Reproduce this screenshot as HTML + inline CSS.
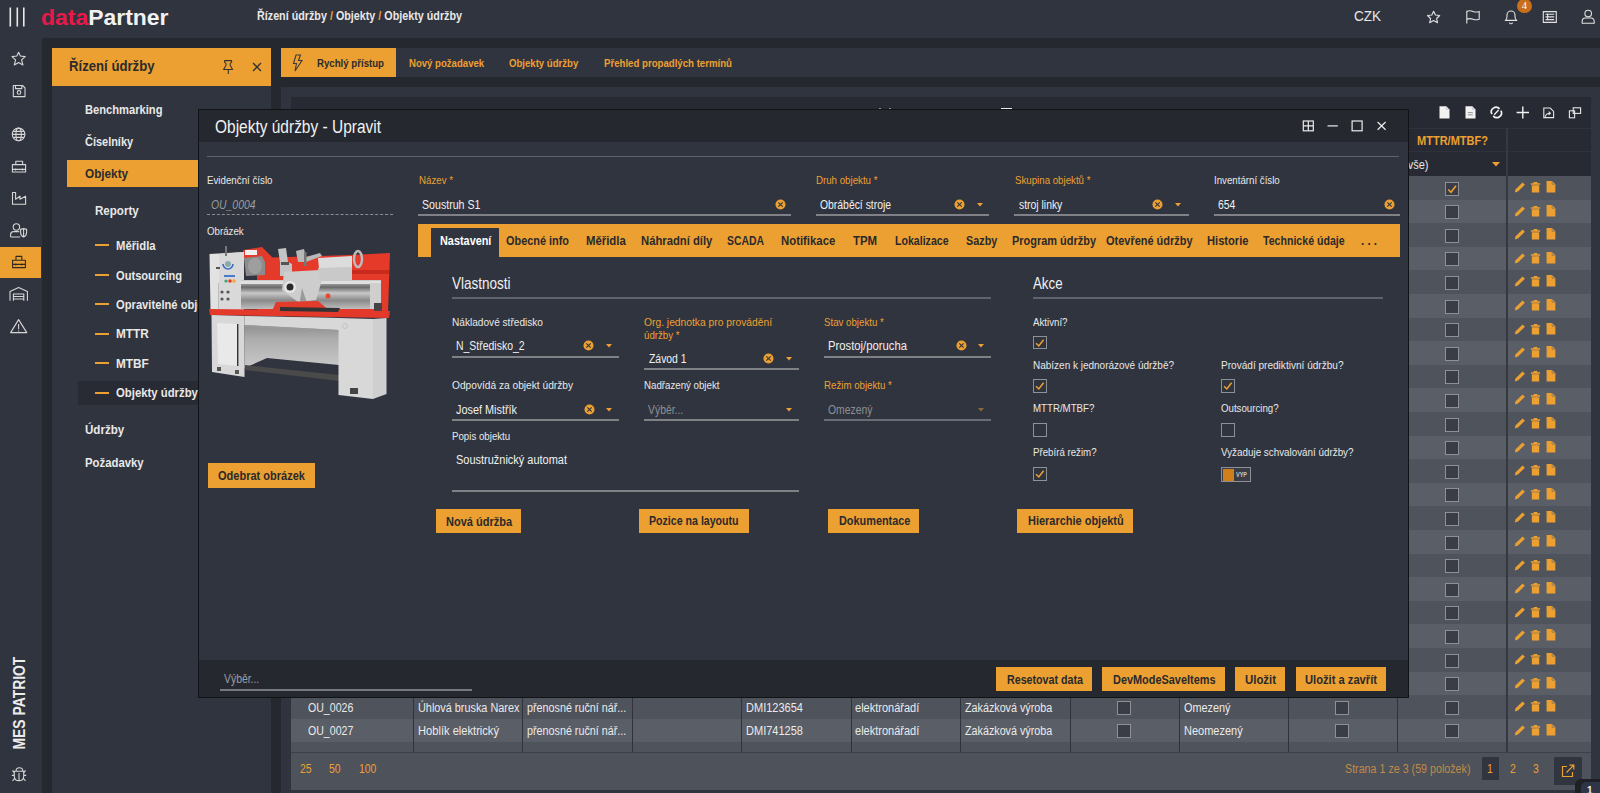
<!DOCTYPE html><html><head><meta charset="utf-8"><style>
*{box-sizing:border-box;margin:0;padding:0}
html,body{width:1600px;height:793px;overflow:hidden;background:#262830;font-family:"Liberation Sans",sans-serif;color:#e8e8e8}
.a{position:absolute}
.t{position:absolute;white-space:nowrap;line-height:1.2}
svg{position:absolute;overflow:visible}
</style></head><body><div class="a" style="left:0px;top:0px;width:1600px;height:38px;background:#30343e;"></div>
<div class="a" style="left:0px;top:38px;width:42px;height:755px;background:#30343e;"></div>
<div class="a" style="left:52px;top:48px;width:219px;height:745px;background:#30343e;"></div>
<div class="a" style="left:52px;top:48px;width:219px;height:38px;background:#eda032;"></div>
<div class="a" style="left:281px;top:48px;width:1319px;height:29px;background:#30343e;"></div>
<div class="a" style="left:281px;top:87px;width:1319px;height:706px;background:#30343e;"></div>
<svg style="left:0;top:0" width="40" height="38"><g stroke="#e8e8e8" stroke-width="1.6"><line x1="10.3" y1="7.5" x2="10.3" y2="26.5"/><line x1="17.3" y1="7.5" x2="17.3" y2="26.5"/><line x1="23.8" y1="7.5" x2="23.8" y2="26.5"/></g></svg>
<div class="t" style="left:41px;top:4.3px;font-size:22.5px;line-height:1.2;font-weight:700;transform-origin:0 0;transform:scaleX(1.02)"><span style="color:#e8194a">data</span><span style="color:#f2f2f2">Partner</span></div>
<div class="t" style="left:257px;top:8.57px;font-size:12.626px;line-height:1.2;color:#e8e8e8;font-weight:700;transform:scaleX(0.8528);transform-origin:0 0;">Řízení údržby <span style="color:#eda032">/</span> Objekty <span style="color:#eda032">/</span> Objekty údržby</div>
<div class="t" style="left:1354px;top:8.23px;font-size:14.868px;line-height:1.2;color:#e8e8e8;font-weight:400;transform:scaleX(0.9080);transform-origin:0 0;">CZK</div>
<svg style="left:1420px;top:0" width="180" height="38" viewBox="1420 0 180 38"><g fill="none" stroke="#e2e2e2" stroke-width="1.1" stroke-linejoin="round">
<path d="M1433.6 11.2 L1435.4 15 L1439.7 15.5 L1436.6 18.5 L1437.5 22.7 L1433.6 20.6 L1429.7 22.7 L1430.6 18.5 L1427.5 15.5 L1431.8 15 Z"/>
<path d="M1466.8 23.5 V10.8 M1466.8 11.4 Q1469.8 10.2 1473 11.4 T1479.2 11.4 V19.2 Q1476.2 20.4 1473 19.2 T1466.8 19.2"/>
<path d="M1505.3 20.4 Q1507 19.2 1507 16.5 V15 A4 4 0 0 1 1515 15 V16.5 Q1515 19.2 1516.8 20.4 Z M1509.6 22.4 A1.4 1.4 0 0 0 1512.4 22.4"/>
<rect x="1543.3" y="11.6" width="13" height="10.8"/><path d="M1545.5 14.2 H1554.2 M1545.5 16.9 H1554.2 M1545.5 19.6 H1554.2 M1547.6 13.6 V20.2"/>
<circle cx="1588.2" cy="13.6" r="3.3"/><path d="M1582.2 23.2 V21.2 A3.2 3.2 0 0 1 1585.4 18 H1591 A3.2 3.2 0 0 1 1594.2 21.2 V23.2 Z"/>
</g></svg>
<div class="a" style="left:1517.3px;top:-1px;width:14.4px;height:14.4px;border-radius:50%;background:#c96f1c"></div>
<div class="t" style="left:1517.3px;top:-0.5px;width:14.4px;text-align:center;font-size:10.5px;line-height:12px;color:#fff;font-family:'Liberation Serif',serif">4</div>
<div class="a" style="left:0px;top:247px;width:41px;height:31px;background:#eda032;"></div>
<svg style="left:0;top:40px" width="42" height="300" viewBox="0 40 42 300"><g fill="none" stroke="#d6d6d6" stroke-width="1.1" stroke-linejoin="round">
<path d="M18.6 52.2 L20.4 56 L25.2 56.6 L21.6 59.9 L22.9 65 L18.6 62.5 L14.3 65 L15.6 59.9 L12 56.6 L16.8 56 Z"/>
<path d="M13.3 85.5 H22.6 L25 87.9 V96.6 H13.3 Z M15.5 85.5 V88.6 H21.8 V85.5"/><circle cx="19" cy="92.4" r="1.8"/>
<circle cx="18.6" cy="134.4" r="6.3"/><ellipse cx="18.6" cy="134.4" rx="2.7" ry="6.3"/><path d="M12.3 134.4 H24.9 M13.2 131.4 H24 M13.2 137.4 H24"/>
<path d="M12.4 164.6 H25.6 V172 H12.4 Z M15.8 164.6 V161.2 H22.6 V164.6 M12.4 169.4 H25.6 M15.6 168.4 V170.4 M22.4 168.4 V170.4"/>
<path d="M12.5 204.3 V192.5 H15.6 V199.2 L20 196.2 V199.2 L25.6 196.2 V204.3 Z"/>
<circle cx="16.4" cy="227" r="3.2"/><path d="M10.6 237 V234.6 A3 3 0 0 1 13.6 231.6 H19.2 M10.6 237 H20.2"/>
<path d="M20.6 229.4 L23.6 228.6 L26.6 229.4 V232.6 Q26.6 235.9 23.6 237 Q20.6 235.9 20.6 232.6 Z M23.6 228.8 V236.8"/>
<path d="M10 300.8 V291.4 L18.6 287.4 L27.4 291.4 V300.8 M13.4 300.8 V294 H23.8 V300.8 M13.4 296.5 H23.8 M13.4 299 H23.8"/>
<path d="M18.6 319.6 L26.8 332.6 H10.6 Z M18.6 324 V329.2 M18.6 330.6 V331.6"/>
</g>
<g fill="none" stroke="#2e2a22" stroke-width="1.1" stroke-linejoin="round"><path d="M12.6 260.3 H25.4 V267.6 H12.6 Z M16 260.3 V256.4 H21.8 V260.3 M12.6 264.4 H25.4 M15.8 263.4 V265.4 M21.8 263.4 V265.4"/></g>
</svg>
<div class="t" style="left:0;top:0;font-size:17px;line-height:1.2;font-weight:700;color:#ececec;transform-origin:0 0;transform:translate(9.7px,749.5px) rotate(-90deg) scaleX(0.817)">MES PATRIOT</div>
<svg style="left:0;top:760px" width="42" height="30" viewBox="0 760 42 30"><path fill="none" stroke="#d6d6d6" stroke-width="1.1" d="M16 771.2 A3.4 3.4 0 0 1 22.8 771.2 M14.3 771.2 H23.7 V776 Q23.7 780.8 19 780.8 Q14.3 780.8 14.3 776 Z M19 773 V780.5 M14.3 772.8 L12.5 770.4 M23.7 772.8 L25.5 770.4 M14.3 775.4 H11.8 M23.7 775.4 H26.2 M14.5 778.6 L12.5 780.8 M23.5 778.6 L25.5 780.8"/></svg>
<div class="t" style="left:69px;top:57.80px;font-size:14.750px;line-height:1.2;color:#2b2b2b;font-weight:700;transform:scaleX(0.8916);transform-origin:0 0;">Řízení údržby</div>
<svg style="left:220px;top:57px" width="16" height="20" viewBox="220 57 16 20"><g fill="none" stroke="#33302a" stroke-width="1.05" stroke-linejoin="round"><path d="M224.6 60.6 H231.6 V62.4 L230.2 63.4 V65.2 L232.6 69.4 H223.6 L226 65.2 V63.4 L224.6 62.4 Z M228.3 69.6 V74"/></g></svg>
<svg style="left:252px;top:62px" width="10" height="10" viewBox="0 0 10 10"><g stroke="#333" stroke-width="1.3"><line x1="1" y1="1" x2="9" y2="9"/><line x1="9" y1="1" x2="1" y2="9"/></g></svg>
<div class="a" style="left:67px;top:160px;width:131px;height:27px;background:#eda032;"></div>
<div class="a" style="left:78px;top:381px;width:120px;height:24px;background:#282b33;"></div>
<div class="t" style="left:84.5px;top:102.22px;font-size:13.216px;line-height:1.2;color:#e8e8e8;font-weight:700;transform:scaleX(0.8450);transform-origin:0 0;">Benchmarking</div>
<div class="t" style="left:84.5px;top:133.72px;font-size:13.216px;line-height:1.2;color:#e8e8e8;font-weight:700;transform:scaleX(0.8295);transform-origin:0 0;">Číselníky</div>
<div class="t" style="left:84.5px;top:166.22px;font-size:13.216px;line-height:1.2;color:#2b2b2b;font-weight:700;transform:scaleX(0.8898);transform-origin:0 0;">Objekty</div>
<div class="t" style="left:95.3px;top:203.02px;font-size:13.216px;line-height:1.2;color:#e8e8e8;font-weight:700;transform:scaleX(0.8759);transform-origin:0 0;">Reporty</div>
<div class="t" style="left:115.8px;top:238.22px;font-size:13.216px;line-height:1.2;color:#e8e8e8;font-weight:700;transform:scaleX(0.8565);transform-origin:0 0;">Měřidla</div>
<div class="a" style="left:95px;top:244px;width:14px;height:2px;background:#eda032;"></div>
<div class="t" style="left:115.8px;top:267.72px;font-size:13.216px;line-height:1.2;color:#e8e8e8;font-weight:700;transform:scaleX(0.8422);transform-origin:0 0;">Outsourcing</div>
<div class="a" style="left:95px;top:274px;width:14px;height:2px;background:#eda032;"></div>
<div class="t" style="left:115.8px;top:296.72px;font-size:13.216px;line-height:1.2;color:#e8e8e8;font-weight:700;transform:scaleX(0.8475);transform-origin:0 0;">Opravitelné objekty</div>
<div class="a" style="left:95px;top:303px;width:14px;height:2px;background:#eda032;"></div>
<div class="t" style="left:115.8px;top:326.32px;font-size:13.216px;line-height:1.2;color:#e8e8e8;font-weight:700;transform:scaleX(0.8944);transform-origin:0 0;">MTTR</div>
<div class="a" style="left:95px;top:333px;width:14px;height:2px;background:#eda032;"></div>
<div class="t" style="left:115.8px;top:355.72px;font-size:13.216px;line-height:1.2;color:#e8e8e8;font-weight:700;transform:scaleX(0.8944);transform-origin:0 0;">MTBF</div>
<div class="a" style="left:95px;top:362px;width:14px;height:2px;background:#eda032;"></div>
<div class="t" style="left:115.8px;top:385.32px;font-size:13.216px;line-height:1.2;color:#e8e8e8;font-weight:700;transform:scaleX(0.8587);transform-origin:0 0;">Objekty údržby</div>
<div class="a" style="left:95px;top:392px;width:14px;height:2px;background:#eda032;"></div>
<div class="t" style="left:84.7px;top:422.42px;font-size:13.216px;line-height:1.2;color:#e8e8e8;font-weight:700;transform:scaleX(0.8782);transform-origin:0 0;">Údržby</div>
<div class="t" style="left:84.7px;top:454.62px;font-size:13.216px;line-height:1.2;color:#e8e8e8;font-weight:700;transform:scaleX(0.8584);transform-origin:0 0;">Požadavky</div>
<div class="a" style="left:281px;top:48px;width:115px;height:29px;background:#eda032;"></div>
<svg style="left:290px;top:54px" width="14" height="18" viewBox="0 0 14 18"><path fill="none" stroke="#3a3a3a" stroke-width="1.1" d="M6 1 H10.5 L8.5 6.5 H12 L5 17 L6.5 9.5 H3.5 Z"/></svg>
<div class="t" style="left:317px;top:56.91px;font-size:11.210px;line-height:1.2;color:#2b2b2b;font-weight:700;transform:scaleX(0.8609);transform-origin:0 0;">Rychlý přístup</div>
<div class="t" style="left:409px;top:56.84px;font-size:11.328px;line-height:1.2;color:#eda032;font-weight:700;transform:scaleX(0.8475);transform-origin:0 0;">Nový požadavek</div>
<div class="t" style="left:509px;top:56.84px;font-size:11.328px;line-height:1.2;color:#eda032;font-weight:700;transform:scaleX(0.8475);transform-origin:0 0;">Objekty údržby</div>
<div class="t" style="left:604px;top:56.87px;font-size:11.281px;line-height:1.2;color:#eda032;font-weight:700;transform:scaleX(0.8555);transform-origin:0 0;">Přehled propadlých termínů</div>
<div class="a" style="left:291px;top:97px;width:1300px;height:693px;background:#272a33;"></div>
<div class="a" style="left:291px;top:128px;width:1300px;height:1px;background:#2f323b;"></div>
<div class="a" style="left:291px;top:151px;width:1300px;height:1px;background:#2f323b;"></div>
<div class="a" style="left:291px;top:176.0px;width:1300px;height:23.6px;background:#4f535c;"></div>
<div class="a" style="left:291px;top:199.6px;width:1300px;height:23.6px;background:#5a5e67;"></div>
<div class="a" style="left:291px;top:223.2px;width:1300px;height:23.6px;background:#4f535c;"></div>
<div class="a" style="left:291px;top:246.8px;width:1300px;height:23.6px;background:#5a5e67;"></div>
<div class="a" style="left:291px;top:270.4px;width:1300px;height:23.6px;background:#4f535c;"></div>
<div class="a" style="left:291px;top:294.0px;width:1300px;height:23.6px;background:#5a5e67;"></div>
<div class="a" style="left:291px;top:317.6px;width:1300px;height:23.6px;background:#4f535c;"></div>
<div class="a" style="left:291px;top:341.2px;width:1300px;height:23.6px;background:#5a5e67;"></div>
<div class="a" style="left:291px;top:364.8px;width:1300px;height:23.6px;background:#4f535c;"></div>
<div class="a" style="left:291px;top:388.4px;width:1300px;height:23.6px;background:#5a5e67;"></div>
<div class="a" style="left:291px;top:412.0px;width:1300px;height:23.6px;background:#4f535c;"></div>
<div class="a" style="left:291px;top:435.6px;width:1300px;height:23.6px;background:#5a5e67;"></div>
<div class="a" style="left:291px;top:459.2px;width:1300px;height:23.6px;background:#4f535c;"></div>
<div class="a" style="left:291px;top:482.8px;width:1300px;height:23.6px;background:#5a5e67;"></div>
<div class="a" style="left:291px;top:506.4px;width:1300px;height:23.6px;background:#4f535c;"></div>
<div class="a" style="left:291px;top:530.0px;width:1300px;height:23.6px;background:#5a5e67;"></div>
<div class="a" style="left:291px;top:553.6px;width:1300px;height:23.6px;background:#4f535c;"></div>
<div class="a" style="left:291px;top:577.2px;width:1300px;height:23.6px;background:#5a5e67;"></div>
<div class="a" style="left:291px;top:600.8px;width:1300px;height:23.6px;background:#4f535c;"></div>
<div class="a" style="left:291px;top:624.4px;width:1300px;height:23.6px;background:#5a5e67;"></div>
<div class="a" style="left:291px;top:648.0px;width:1300px;height:23.6px;background:#4f535c;"></div>
<div class="a" style="left:291px;top:671.6px;width:1300px;height:23.6px;background:#5a5e67;"></div>
<div class="a" style="left:291px;top:695.2px;width:1300px;height:23.6px;background:#4f535c;"></div>
<div class="a" style="left:291px;top:718.8px;width:1300px;height:23.6px;background:#5a5e67;"></div>
<div class="a" style="left:291px;top:742.4px;width:1300px;height:9.6px;background:#4f535c;"></div>
<div class="a" style="left:413px;top:128px;width:1px;height:624px;background:#30333b;"></div>
<div class="a" style="left:522px;top:128px;width:1px;height:624px;background:#30333b;"></div>
<div class="a" style="left:632px;top:128px;width:1px;height:624px;background:#30333b;"></div>
<div class="a" style="left:741px;top:128px;width:1px;height:624px;background:#30333b;"></div>
<div class="a" style="left:851px;top:128px;width:1px;height:624px;background:#30333b;"></div>
<div class="a" style="left:960px;top:128px;width:1px;height:624px;background:#30333b;"></div>
<div class="a" style="left:1070px;top:128px;width:1px;height:624px;background:#30333b;"></div>
<div class="a" style="left:1179px;top:128px;width:1px;height:624px;background:#30333b;"></div>
<div class="a" style="left:1288px;top:128px;width:1px;height:624px;background:#30333b;"></div>
<div class="a" style="left:1397px;top:128px;width:1px;height:624px;background:#30333b;"></div>
<div class="a" style="left:1506px;top:128px;width:2px;height:624px;background:#363940;"></div>
<div class="a" style="left:291px;top:752px;width:1300px;height:38px;background:#4e525b;"></div>
<div class="a" style="left:291px;top:751.5px;width:1300px;height:1px;background:#3d4048;"></div>
<div class="t" style="left:1417px;top:132.93px;font-size:12.862px;line-height:1.2;color:#eda032;font-weight:700;transform:scaleX(0.8569);transform-origin:0 0;">MTTR/MTBF?</div>
<div class="t" style="left:1403.5px;top:156.86px;font-size:12.980px;line-height:1.2;color:#e8e8e8;font-weight:400;transform:scaleX(0.8475);transform-origin:0 0;">(vše)</div>
<svg style="left:1492px;top:162px" width="8" height="5"><path d="M0 0 H8 L4 4.5 Z" fill="#eda032"/></svg>
<svg style="left:1430px;top:100px" width="160" height="25" viewBox="1430 100 160 25">
<path fill="#f2f2f2" d="M1439.5 106.2 H1446.3 L1449.5 109.4 V118.5 H1439.5 Z"/><path fill="none" stroke="#b9a9c9" stroke-width="0.6" d="M1446.3 106.4 V109.4 H1449.3"/>
<path fill="#f2f2f2" d="M1465.5 106.2 H1472.3 L1475.5 109.4 V118.5 H1465.5 Z"/><path fill="none" stroke="#b9a9c9" stroke-width="0.6" d="M1472.3 106.4 V109.4 H1475.3"/><path stroke="#8a8a8a" stroke-width="0.9" d="M1467.8 112.6 H1472.8 M1467.8 114.8 H1472.8"/>
<g fill="none" stroke="#f2f2f2" stroke-width="1.7"><path d="M1491.9 114.2 A4.7 4.7 0 0 1 1499.6 108.9"/><path d="M1500.9 110.6 A4.7 4.7 0 0 1 1493.2 115.9"/><path d="M1494.2 114.8 L1498.6 110" stroke-width="1.3"/></g>
<path stroke="#f2f2f2" stroke-width="1.4" d="M1522.8 106.5 V118.5 M1516.6 112.5 H1529"/>
<g fill="none" stroke="#e6e6e6" stroke-width="1.1"><path d="M1543.8 117.6 V108 H1550.2 L1553.6 111.4 V117.6 Z"/><path d="M1545.2 116.8 Q1546 113.2 1550 113.2 M1548.6 111.6 L1550.4 113.2 L1548.6 114.8"/></g>
<g fill="none" stroke="#e6e6e6" stroke-width="1.1"><rect x="1573.2" y="107.8" width="7.4" height="5.6"/><rect x="1569.4" y="110.8" width="5.2" height="7"/></g>
</svg>
<div class="a" style="left:1445px;top:181.5px;width:14px;height:14px;border:1.5px solid #8e9095;background:#3a3d46"></div>
<svg style="left:1445px;top:181.5px" width="14" height="14" viewBox="0 0 14 14"><path d="M3.2 7.5 L6 10.3 L11 3.8" fill="none" stroke="#eda032" stroke-width="1.6"/></svg>
<svg style="left:1512.5px;top:181.00px" width="45" height="12" viewBox="0 0 46 13"><g fill="#eda032"><path d="M0.5 12.5 L1.5 9 L9 1.5 L11.5 4 L4 11.5 Z"/><path d="M18 2.5 H28 V4 H18 Z M21 1 H25 V2.5 H21 Z M19 4.5 H27 V12.5 H19 Z"/><path d="M35 0 H41 L44.5 3.5 V12.5 H35 Z"/></g><path d="M41 0 V3.5 H44.5" fill="none" stroke="#5a5e67" stroke-width="0.6"/></svg>
<div class="a" style="left:1445px;top:205.1px;width:14px;height:14px;border:1.5px solid #8e9095;background:#3a3d46"></div>
<svg style="left:1512.5px;top:204.60px" width="45" height="12" viewBox="0 0 46 13"><g fill="#eda032"><path d="M0.5 12.5 L1.5 9 L9 1.5 L11.5 4 L4 11.5 Z"/><path d="M18 2.5 H28 V4 H18 Z M21 1 H25 V2.5 H21 Z M19 4.5 H27 V12.5 H19 Z"/><path d="M35 0 H41 L44.5 3.5 V12.5 H35 Z"/></g><path d="M41 0 V3.5 H44.5" fill="none" stroke="#5a5e67" stroke-width="0.6"/></svg>
<div class="a" style="left:1445px;top:228.7px;width:14px;height:14px;border:1.5px solid #8e9095;background:#3a3d46"></div>
<svg style="left:1512.5px;top:228.20px" width="45" height="12" viewBox="0 0 46 13"><g fill="#eda032"><path d="M0.5 12.5 L1.5 9 L9 1.5 L11.5 4 L4 11.5 Z"/><path d="M18 2.5 H28 V4 H18 Z M21 1 H25 V2.5 H21 Z M19 4.5 H27 V12.5 H19 Z"/><path d="M35 0 H41 L44.5 3.5 V12.5 H35 Z"/></g><path d="M41 0 V3.5 H44.5" fill="none" stroke="#5a5e67" stroke-width="0.6"/></svg>
<div class="a" style="left:1445px;top:252.3px;width:14px;height:14px;border:1.5px solid #8e9095;background:#3a3d46"></div>
<svg style="left:1512.5px;top:251.80px" width="45" height="12" viewBox="0 0 46 13"><g fill="#eda032"><path d="M0.5 12.5 L1.5 9 L9 1.5 L11.5 4 L4 11.5 Z"/><path d="M18 2.5 H28 V4 H18 Z M21 1 H25 V2.5 H21 Z M19 4.5 H27 V12.5 H19 Z"/><path d="M35 0 H41 L44.5 3.5 V12.5 H35 Z"/></g><path d="M41 0 V3.5 H44.5" fill="none" stroke="#5a5e67" stroke-width="0.6"/></svg>
<div class="a" style="left:1445px;top:275.9px;width:14px;height:14px;border:1.5px solid #8e9095;background:#3a3d46"></div>
<svg style="left:1512.5px;top:275.40px" width="45" height="12" viewBox="0 0 46 13"><g fill="#eda032"><path d="M0.5 12.5 L1.5 9 L9 1.5 L11.5 4 L4 11.5 Z"/><path d="M18 2.5 H28 V4 H18 Z M21 1 H25 V2.5 H21 Z M19 4.5 H27 V12.5 H19 Z"/><path d="M35 0 H41 L44.5 3.5 V12.5 H35 Z"/></g><path d="M41 0 V3.5 H44.5" fill="none" stroke="#5a5e67" stroke-width="0.6"/></svg>
<div class="a" style="left:1445px;top:299.5px;width:14px;height:14px;border:1.5px solid #8e9095;background:#3a3d46"></div>
<svg style="left:1512.5px;top:299.00px" width="45" height="12" viewBox="0 0 46 13"><g fill="#eda032"><path d="M0.5 12.5 L1.5 9 L9 1.5 L11.5 4 L4 11.5 Z"/><path d="M18 2.5 H28 V4 H18 Z M21 1 H25 V2.5 H21 Z M19 4.5 H27 V12.5 H19 Z"/><path d="M35 0 H41 L44.5 3.5 V12.5 H35 Z"/></g><path d="M41 0 V3.5 H44.5" fill="none" stroke="#5a5e67" stroke-width="0.6"/></svg>
<div class="a" style="left:1445px;top:323.1px;width:14px;height:14px;border:1.5px solid #8e9095;background:#3a3d46"></div>
<svg style="left:1512.5px;top:322.60px" width="45" height="12" viewBox="0 0 46 13"><g fill="#eda032"><path d="M0.5 12.5 L1.5 9 L9 1.5 L11.5 4 L4 11.5 Z"/><path d="M18 2.5 H28 V4 H18 Z M21 1 H25 V2.5 H21 Z M19 4.5 H27 V12.5 H19 Z"/><path d="M35 0 H41 L44.5 3.5 V12.5 H35 Z"/></g><path d="M41 0 V3.5 H44.5" fill="none" stroke="#5a5e67" stroke-width="0.6"/></svg>
<div class="a" style="left:1445px;top:346.7px;width:14px;height:14px;border:1.5px solid #8e9095;background:#3a3d46"></div>
<svg style="left:1512.5px;top:346.20px" width="45" height="12" viewBox="0 0 46 13"><g fill="#eda032"><path d="M0.5 12.5 L1.5 9 L9 1.5 L11.5 4 L4 11.5 Z"/><path d="M18 2.5 H28 V4 H18 Z M21 1 H25 V2.5 H21 Z M19 4.5 H27 V12.5 H19 Z"/><path d="M35 0 H41 L44.5 3.5 V12.5 H35 Z"/></g><path d="M41 0 V3.5 H44.5" fill="none" stroke="#5a5e67" stroke-width="0.6"/></svg>
<div class="a" style="left:1445px;top:370.3px;width:14px;height:14px;border:1.5px solid #8e9095;background:#3a3d46"></div>
<svg style="left:1512.5px;top:369.80px" width="45" height="12" viewBox="0 0 46 13"><g fill="#eda032"><path d="M0.5 12.5 L1.5 9 L9 1.5 L11.5 4 L4 11.5 Z"/><path d="M18 2.5 H28 V4 H18 Z M21 1 H25 V2.5 H21 Z M19 4.5 H27 V12.5 H19 Z"/><path d="M35 0 H41 L44.5 3.5 V12.5 H35 Z"/></g><path d="M41 0 V3.5 H44.5" fill="none" stroke="#5a5e67" stroke-width="0.6"/></svg>
<div class="a" style="left:1445px;top:393.9px;width:14px;height:14px;border:1.5px solid #8e9095;background:#3a3d46"></div>
<svg style="left:1512.5px;top:393.40px" width="45" height="12" viewBox="0 0 46 13"><g fill="#eda032"><path d="M0.5 12.5 L1.5 9 L9 1.5 L11.5 4 L4 11.5 Z"/><path d="M18 2.5 H28 V4 H18 Z M21 1 H25 V2.5 H21 Z M19 4.5 H27 V12.5 H19 Z"/><path d="M35 0 H41 L44.5 3.5 V12.5 H35 Z"/></g><path d="M41 0 V3.5 H44.5" fill="none" stroke="#5a5e67" stroke-width="0.6"/></svg>
<div class="a" style="left:1445px;top:417.5px;width:14px;height:14px;border:1.5px solid #8e9095;background:#3a3d46"></div>
<svg style="left:1512.5px;top:417.00px" width="45" height="12" viewBox="0 0 46 13"><g fill="#eda032"><path d="M0.5 12.5 L1.5 9 L9 1.5 L11.5 4 L4 11.5 Z"/><path d="M18 2.5 H28 V4 H18 Z M21 1 H25 V2.5 H21 Z M19 4.5 H27 V12.5 H19 Z"/><path d="M35 0 H41 L44.5 3.5 V12.5 H35 Z"/></g><path d="M41 0 V3.5 H44.5" fill="none" stroke="#5a5e67" stroke-width="0.6"/></svg>
<div class="a" style="left:1445px;top:441.1px;width:14px;height:14px;border:1.5px solid #8e9095;background:#3a3d46"></div>
<svg style="left:1512.5px;top:440.60px" width="45" height="12" viewBox="0 0 46 13"><g fill="#eda032"><path d="M0.5 12.5 L1.5 9 L9 1.5 L11.5 4 L4 11.5 Z"/><path d="M18 2.5 H28 V4 H18 Z M21 1 H25 V2.5 H21 Z M19 4.5 H27 V12.5 H19 Z"/><path d="M35 0 H41 L44.5 3.5 V12.5 H35 Z"/></g><path d="M41 0 V3.5 H44.5" fill="none" stroke="#5a5e67" stroke-width="0.6"/></svg>
<div class="a" style="left:1445px;top:464.7px;width:14px;height:14px;border:1.5px solid #8e9095;background:#3a3d46"></div>
<svg style="left:1512.5px;top:464.20px" width="45" height="12" viewBox="0 0 46 13"><g fill="#eda032"><path d="M0.5 12.5 L1.5 9 L9 1.5 L11.5 4 L4 11.5 Z"/><path d="M18 2.5 H28 V4 H18 Z M21 1 H25 V2.5 H21 Z M19 4.5 H27 V12.5 H19 Z"/><path d="M35 0 H41 L44.5 3.5 V12.5 H35 Z"/></g><path d="M41 0 V3.5 H44.5" fill="none" stroke="#5a5e67" stroke-width="0.6"/></svg>
<div class="a" style="left:1445px;top:488.3px;width:14px;height:14px;border:1.5px solid #8e9095;background:#3a3d46"></div>
<svg style="left:1512.5px;top:487.80px" width="45" height="12" viewBox="0 0 46 13"><g fill="#eda032"><path d="M0.5 12.5 L1.5 9 L9 1.5 L11.5 4 L4 11.5 Z"/><path d="M18 2.5 H28 V4 H18 Z M21 1 H25 V2.5 H21 Z M19 4.5 H27 V12.5 H19 Z"/><path d="M35 0 H41 L44.5 3.5 V12.5 H35 Z"/></g><path d="M41 0 V3.5 H44.5" fill="none" stroke="#5a5e67" stroke-width="0.6"/></svg>
<div class="a" style="left:1445px;top:511.9px;width:14px;height:14px;border:1.5px solid #8e9095;background:#3a3d46"></div>
<svg style="left:1512.5px;top:511.40px" width="45" height="12" viewBox="0 0 46 13"><g fill="#eda032"><path d="M0.5 12.5 L1.5 9 L9 1.5 L11.5 4 L4 11.5 Z"/><path d="M18 2.5 H28 V4 H18 Z M21 1 H25 V2.5 H21 Z M19 4.5 H27 V12.5 H19 Z"/><path d="M35 0 H41 L44.5 3.5 V12.5 H35 Z"/></g><path d="M41 0 V3.5 H44.5" fill="none" stroke="#5a5e67" stroke-width="0.6"/></svg>
<div class="a" style="left:1445px;top:535.5px;width:14px;height:14px;border:1.5px solid #8e9095;background:#3a3d46"></div>
<svg style="left:1512.5px;top:535.00px" width="45" height="12" viewBox="0 0 46 13"><g fill="#eda032"><path d="M0.5 12.5 L1.5 9 L9 1.5 L11.5 4 L4 11.5 Z"/><path d="M18 2.5 H28 V4 H18 Z M21 1 H25 V2.5 H21 Z M19 4.5 H27 V12.5 H19 Z"/><path d="M35 0 H41 L44.5 3.5 V12.5 H35 Z"/></g><path d="M41 0 V3.5 H44.5" fill="none" stroke="#5a5e67" stroke-width="0.6"/></svg>
<div class="a" style="left:1445px;top:559.1px;width:14px;height:14px;border:1.5px solid #8e9095;background:#3a3d46"></div>
<svg style="left:1512.5px;top:558.60px" width="45" height="12" viewBox="0 0 46 13"><g fill="#eda032"><path d="M0.5 12.5 L1.5 9 L9 1.5 L11.5 4 L4 11.5 Z"/><path d="M18 2.5 H28 V4 H18 Z M21 1 H25 V2.5 H21 Z M19 4.5 H27 V12.5 H19 Z"/><path d="M35 0 H41 L44.5 3.5 V12.5 H35 Z"/></g><path d="M41 0 V3.5 H44.5" fill="none" stroke="#5a5e67" stroke-width="0.6"/></svg>
<div class="a" style="left:1445px;top:582.7px;width:14px;height:14px;border:1.5px solid #8e9095;background:#3a3d46"></div>
<svg style="left:1512.5px;top:582.20px" width="45" height="12" viewBox="0 0 46 13"><g fill="#eda032"><path d="M0.5 12.5 L1.5 9 L9 1.5 L11.5 4 L4 11.5 Z"/><path d="M18 2.5 H28 V4 H18 Z M21 1 H25 V2.5 H21 Z M19 4.5 H27 V12.5 H19 Z"/><path d="M35 0 H41 L44.5 3.5 V12.5 H35 Z"/></g><path d="M41 0 V3.5 H44.5" fill="none" stroke="#5a5e67" stroke-width="0.6"/></svg>
<div class="a" style="left:1445px;top:606.3px;width:14px;height:14px;border:1.5px solid #8e9095;background:#3a3d46"></div>
<svg style="left:1512.5px;top:605.80px" width="45" height="12" viewBox="0 0 46 13"><g fill="#eda032"><path d="M0.5 12.5 L1.5 9 L9 1.5 L11.5 4 L4 11.5 Z"/><path d="M18 2.5 H28 V4 H18 Z M21 1 H25 V2.5 H21 Z M19 4.5 H27 V12.5 H19 Z"/><path d="M35 0 H41 L44.5 3.5 V12.5 H35 Z"/></g><path d="M41 0 V3.5 H44.5" fill="none" stroke="#5a5e67" stroke-width="0.6"/></svg>
<div class="a" style="left:1445px;top:629.9px;width:14px;height:14px;border:1.5px solid #8e9095;background:#3a3d46"></div>
<svg style="left:1512.5px;top:629.40px" width="45" height="12" viewBox="0 0 46 13"><g fill="#eda032"><path d="M0.5 12.5 L1.5 9 L9 1.5 L11.5 4 L4 11.5 Z"/><path d="M18 2.5 H28 V4 H18 Z M21 1 H25 V2.5 H21 Z M19 4.5 H27 V12.5 H19 Z"/><path d="M35 0 H41 L44.5 3.5 V12.5 H35 Z"/></g><path d="M41 0 V3.5 H44.5" fill="none" stroke="#5a5e67" stroke-width="0.6"/></svg>
<div class="a" style="left:1445px;top:653.5px;width:14px;height:14px;border:1.5px solid #8e9095;background:#3a3d46"></div>
<svg style="left:1512.5px;top:653.00px" width="45" height="12" viewBox="0 0 46 13"><g fill="#eda032"><path d="M0.5 12.5 L1.5 9 L9 1.5 L11.5 4 L4 11.5 Z"/><path d="M18 2.5 H28 V4 H18 Z M21 1 H25 V2.5 H21 Z M19 4.5 H27 V12.5 H19 Z"/><path d="M35 0 H41 L44.5 3.5 V12.5 H35 Z"/></g><path d="M41 0 V3.5 H44.5" fill="none" stroke="#5a5e67" stroke-width="0.6"/></svg>
<div class="a" style="left:1445px;top:677.1px;width:14px;height:14px;border:1.5px solid #8e9095;background:#3a3d46"></div>
<svg style="left:1512.5px;top:676.60px" width="45" height="12" viewBox="0 0 46 13"><g fill="#eda032"><path d="M0.5 12.5 L1.5 9 L9 1.5 L11.5 4 L4 11.5 Z"/><path d="M18 2.5 H28 V4 H18 Z M21 1 H25 V2.5 H21 Z M19 4.5 H27 V12.5 H19 Z"/><path d="M35 0 H41 L44.5 3.5 V12.5 H35 Z"/></g><path d="M41 0 V3.5 H44.5" fill="none" stroke="#5a5e67" stroke-width="0.6"/></svg>
<div class="a" style="left:1445px;top:700.7px;width:14px;height:14px;border:1.5px solid #8e9095;background:#3a3d46"></div>
<svg style="left:1512.5px;top:700.20px" width="45" height="12" viewBox="0 0 46 13"><g fill="#eda032"><path d="M0.5 12.5 L1.5 9 L9 1.5 L11.5 4 L4 11.5 Z"/><path d="M18 2.5 H28 V4 H18 Z M21 1 H25 V2.5 H21 Z M19 4.5 H27 V12.5 H19 Z"/><path d="M35 0 H41 L44.5 3.5 V12.5 H35 Z"/></g><path d="M41 0 V3.5 H44.5" fill="none" stroke="#5a5e67" stroke-width="0.6"/></svg>
<div class="a" style="left:1445px;top:724.3px;width:14px;height:14px;border:1.5px solid #8e9095;background:#3a3d46"></div>
<svg style="left:1512.5px;top:723.80px" width="45" height="12" viewBox="0 0 46 13"><g fill="#eda032"><path d="M0.5 12.5 L1.5 9 L9 1.5 L11.5 4 L4 11.5 Z"/><path d="M18 2.5 H28 V4 H18 Z M21 1 H25 V2.5 H21 Z M19 4.5 H27 V12.5 H19 Z"/><path d="M35 0 H41 L44.5 3.5 V12.5 H35 Z"/></g><path d="M41 0 V3.5 H44.5" fill="none" stroke="#5a5e67" stroke-width="0.6"/></svg>
<div class="t" style="left:307.7px;top:700.78px;font-size:12.272px;line-height:1.2;color:#eaeaea;font-weight:400;transform:scaleX(0.8626);transform-origin:0 0;">OU_0026</div>
<div class="t" style="left:417.6px;top:700.78px;font-size:12.272px;line-height:1.2;color:#eaeaea;font-weight:400;transform:scaleX(0.8853);transform-origin:0 0;">Úhlová bruska Narex</div>
<div class="t" style="left:526.7px;top:700.78px;font-size:12.272px;line-height:1.2;color:#eaeaea;font-weight:400;transform:scaleX(0.8773);transform-origin:0 0;">přenosné ruční nář...</div>
<div class="t" style="left:745.6px;top:700.78px;font-size:12.272px;line-height:1.2;color:#eaeaea;font-weight:400;transform:scaleX(0.8987);transform-origin:0 0;">DMI123654</div>
<div class="t" style="left:855.4px;top:700.78px;font-size:12.272px;line-height:1.2;color:#eaeaea;font-weight:400;transform:scaleX(0.8981);transform-origin:0 0;">elektronářadí</div>
<div class="t" style="left:964.7px;top:700.78px;font-size:12.272px;line-height:1.2;color:#eaeaea;font-weight:400;transform:scaleX(0.8760);transform-origin:0 0;">Zakázková výroba</div>
<div class="t" style="left:1183.5px;top:700.78px;font-size:12.272px;line-height:1.2;color:#eaeaea;font-weight:400;transform:scaleX(0.8857);transform-origin:0 0;">Omezený</div>
<div class="a" style="left:1117px;top:700.7px;width:14px;height:14px;border:1.5px solid #8e9095;background:#3a3d46"></div>
<div class="a" style="left:1335px;top:700.7px;width:14px;height:14px;border:1.5px solid #8e9095;background:#3a3d46"></div>
<div class="t" style="left:307.7px;top:724.38px;font-size:12.272px;line-height:1.2;color:#eaeaea;font-weight:400;transform:scaleX(0.8626);transform-origin:0 0;">OU_0027</div>
<div class="t" style="left:417.6px;top:724.38px;font-size:12.272px;line-height:1.2;color:#eaeaea;font-weight:400;transform:scaleX(0.9071);transform-origin:0 0;">Hoblík elektrický</div>
<div class="t" style="left:526.7px;top:724.38px;font-size:12.272px;line-height:1.2;color:#eaeaea;font-weight:400;transform:scaleX(0.8773);transform-origin:0 0;">přenosné ruční nář...</div>
<div class="t" style="left:745.6px;top:724.38px;font-size:12.272px;line-height:1.2;color:#eaeaea;font-weight:400;transform:scaleX(0.8987);transform-origin:0 0;">DMI741258</div>
<div class="t" style="left:855.4px;top:724.38px;font-size:12.272px;line-height:1.2;color:#eaeaea;font-weight:400;transform:scaleX(0.8981);transform-origin:0 0;">elektronářadí</div>
<div class="t" style="left:964.7px;top:724.38px;font-size:12.272px;line-height:1.2;color:#eaeaea;font-weight:400;transform:scaleX(0.8760);transform-origin:0 0;">Zakázková výroba</div>
<div class="t" style="left:1183.5px;top:724.38px;font-size:12.272px;line-height:1.2;color:#eaeaea;font-weight:400;transform:scaleX(0.8968);transform-origin:0 0;">Neomezený</div>
<div class="a" style="left:1117px;top:724.3px;width:14px;height:14px;border:1.5px solid #8e9095;background:#3a3d46"></div>
<div class="a" style="left:1335px;top:724.3px;width:14px;height:14px;border:1.5px solid #8e9095;background:#3a3d46"></div>
<div class="t" style="left:299.5px;top:762.48px;font-size:12.272px;line-height:1.2;color:#eda032;font-weight:400;transform:scaleX(0.8475);transform-origin:0 0;">25</div>
<div class="t" style="left:329px;top:762.48px;font-size:12.272px;line-height:1.2;color:#eda032;font-weight:400;transform:scaleX(0.8475);transform-origin:0 0;">50</div>
<div class="t" style="left:359px;top:762.48px;font-size:12.272px;line-height:1.2;color:#eda032;font-weight:400;transform:scaleX(0.8475);transform-origin:0 0;">100</div>
<div class="t" style="left:1345px;top:762.14px;font-size:12.508px;line-height:1.2;color:#c08a48;font-weight:400;transform:scaleX(0.8559);transform-origin:0 0;">Strana 1 ze 3 (59 položek)</div>
<div class="a" style="left:1481.5px;top:757px;width:17.5px;height:23px;background:#31353f;"></div>
<div class="t" style="left:1486.5px;top:762.28px;font-size:12.272px;line-height:1.2;color:#eda032;font-weight:400;transform:scaleX(0.8475);transform-origin:0 0;">1</div>
<div class="t" style="left:1509.5px;top:762.28px;font-size:12.272px;line-height:1.2;color:#eda032;font-weight:400;transform:scaleX(0.8475);transform-origin:0 0;">2</div>
<div class="t" style="left:1532.5px;top:762.28px;font-size:12.272px;line-height:1.2;color:#eda032;font-weight:400;transform:scaleX(0.8475);transform-origin:0 0;">3</div>
<div class="a" style="left:1554px;top:757px;width:28px;height:28px;background:#31353f;"></div>
<svg style="left:1561px;top:764px" width="14" height="14" viewBox="0 0 14 14"><g fill="none" stroke="#eda032" stroke-width="1.2"><path d="M6 2.5 H1.5 V12.5 H11.5 V8 M8.5 1.2 H12.8 V5.5 M12.8 1.2 L5.5 8.5"/></g></svg>
<div class="a" style="left:1575px;top:779px;width:34px;height:20px;border-radius:6px;background:#1f2025"></div>
<div class="a" style="left:1581px;top:782px;width:30px;height:18px;border-radius:5px;background:#2d3546"></div>
<div class="t" style="left:1587px;top:783.06px;font-size:11.800px;line-height:1.2;color:#f0f0f0;font-weight:700;transform:scaleX(0.8475);transform-origin:0 0;">1</div>
<div class="a" style="left:878.5px;top:108px;width:2px;height:1px;background:#8a8c90;"></div>
<div class="a" style="left:889px;top:108px;width:2px;height:1px;background:#8a8c90;"></div>
<div class="a" style="left:1000.5px;top:107.5px;width:11.5px;height:1.5px;background:#e8e8e8;"></div>
<div class="a" style="left:198px;top:109px;width:1211px;height:589px;background:#30343e;border:1px solid #121317;overflow:hidden">
<div class="a" style="left:-199px;top:-110px;width:1600px;height:793px">
<div class="a" style="left:199px;top:110px;width:1209px;height:32px;background:#262830;"></div>
<div class="a" style="left:199px;top:660px;width:1209px;height:37px;background:#262830;"></div>
<div class="t" style="left:215px;top:116.70px;font-size:17.936px;line-height:1.2;color:#f2f2f2;font-weight:400;transform:scaleX(0.8635);transform-origin:0 0;">Objekty údržby - Upravit</div>
<svg style="left:1295px;top:113px" width="100" height="27" viewBox="1295 113 100 27"><g fill="none" stroke="#ececec" stroke-width="1.2">
<rect x="1303.3" y="121" width="10" height="9.8"/><path d="M1308.3 121 V130.8 M1303.3 125.9 H1313.3"/>
<path d="M1327.5 125.9 H1337.8"/>
<rect x="1352.1" y="121" width="10" height="9.8"/>
<path d="M1377.6 122 L1385.6 129.8 M1385.6 122 L1377.6 129.8"/>
</g></svg>
<div class="a" style="left:207px;top:156px;width:1192px;height:1.3px;background:#606266;"></div>
<div class="t" style="left:207px;top:174.27px;font-size:11.446px;line-height:1.2;color:#e8e8e8;font-weight:400;transform:scaleX(0.8513);transform-origin:0 0;">Evidenční číslo</div>
<div class="t" style="left:211.4px;top:198.28px;font-size:12.272px;line-height:1.2;color:#9a9ca0;font-weight:400;transform:scaleX(0.8475);transform-origin:0 0;font-style:italic">OU_0004</div>
<div class="a" style="left:207px;top:214px;width:186px;height:0;border-top:1.4px dashed #8a8c92"></div>
<div class="t" style="left:207px;top:224.77px;font-size:11.446px;line-height:1.2;color:#e8e8e8;font-weight:400;transform:scaleX(0.8475);transform-origin:0 0;">Obrázek</div>
<div class="t" style="left:418.5px;top:174.27px;font-size:11.446px;line-height:1.2;color:#eda032;font-weight:400;transform:scaleX(0.8475);transform-origin:0 0;">Název *</div>
<div class="t" style="left:422.3px;top:197.88px;font-size:12.272px;line-height:1.2;color:#f0f0f0;font-weight:400;transform:scaleX(0.8650);transform-origin:0 0;">Soustruh S1</div>
<div class="a" style="left:418px;top:214px;width:372.5px;height:2px;background:#7f8186;"></div>
<svg style="left:774.8px;top:199.1px" width="11" height="11" viewBox="0 0 11 11"><circle cx="5.5" cy="5.5" r="5" fill="#eda032"/><path d="M3.3 3.3 L7.7 7.7 M7.7 3.3 L3.3 7.7" stroke="#30343e" stroke-width="1.1"/></svg>
<div class="t" style="left:816.2px;top:174.17px;font-size:11.446px;line-height:1.2;color:#eda032;font-weight:400;transform:scaleX(0.8475);transform-origin:0 0;">Druh objektu *</div>
<div class="t" style="left:820px;top:197.68px;font-size:12.272px;line-height:1.2;color:#f0f0f0;font-weight:400;transform:scaleX(0.8475);transform-origin:0 0;">Obráběcí stroje</div>
<div class="a" style="left:816px;top:214px;width:173px;height:2px;background:#7f8186;"></div>
<svg style="left:953.5px;top:198.9px" width="11" height="11" viewBox="0 0 11 11"><circle cx="5.5" cy="5.5" r="5" fill="#eda032"/><path d="M3.3 3.3 L7.7 7.7 M7.7 3.3 L3.3 7.7" stroke="#30343e" stroke-width="1.1"/></svg>
<svg style="left:976.5px;top:202.9px" width="6" height="3.5" viewBox="0 0 6 3.5"><path d="M0 0 H6 L3 3.5 Z" fill="#eda032"/></svg>
<div class="t" style="left:1015px;top:174.17px;font-size:11.446px;line-height:1.2;color:#eda032;font-weight:400;transform:scaleX(0.8475);transform-origin:0 0;">Skupina objektů *</div>
<div class="t" style="left:1019px;top:197.68px;font-size:12.272px;line-height:1.2;color:#f0f0f0;font-weight:400;transform:scaleX(0.8475);transform-origin:0 0;">stroj linky</div>
<div class="a" style="left:1014px;top:214px;width:174.5999999999999px;height:2px;background:#7f8186;"></div>
<svg style="left:1152.3px;top:198.9px" width="11" height="11" viewBox="0 0 11 11"><circle cx="5.5" cy="5.5" r="5" fill="#eda032"/><path d="M3.3 3.3 L7.7 7.7 M7.7 3.3 L3.3 7.7" stroke="#30343e" stroke-width="1.1"/></svg>
<svg style="left:1175px;top:202.9px" width="6" height="3.5" viewBox="0 0 6 3.5"><path d="M0 0 H6 L3 3.5 Z" fill="#eda032"/></svg>
<div class="t" style="left:1213.7px;top:174.17px;font-size:11.446px;line-height:1.2;color:#e8e8e8;font-weight:400;transform:scaleX(0.8475);transform-origin:0 0;">Inventární číslo</div>
<div class="t" style="left:1218px;top:197.68px;font-size:12.272px;line-height:1.2;color:#f0f0f0;font-weight:400;transform:scaleX(0.8475);transform-origin:0 0;">654</div>
<div class="a" style="left:1213.7px;top:214px;width:185.89999999999986px;height:2px;background:#7f8186;"></div>
<svg style="left:1384.4px;top:198.9px" width="11" height="11" viewBox="0 0 11 11"><circle cx="5.5" cy="5.5" r="5" fill="#eda032"/><path d="M3.3 3.3 L7.7 7.7 M7.7 3.3 L3.3 7.7" stroke="#30343e" stroke-width="1.1"/></svg>
<div class="a" style="left:418px;top:224px;width:981.6px;height:33px;background:#eda032;"></div>
<div class="a" style="left:431px;top:228px;width:68px;height:29px;background:#30343e;"></div>
<div class="t" style="left:439.6px;top:233.59px;font-size:12.591px;line-height:1.2;color:#ffffff;font-weight:700;transform:scaleX(0.8648);transform-origin:0 0;">Nastavení</div>
<div class="t" style="left:506px;top:233.64px;font-size:12.508px;line-height:1.2;color:#2a2a2a;font-weight:700;transform:scaleX(0.8722);transform-origin:0 0;">Obecné info</div>
<div class="t" style="left:585.5px;top:233.64px;font-size:12.508px;line-height:1.2;color:#2a2a2a;font-weight:700;transform:scaleX(0.9094);transform-origin:0 0;">Měřidla</div>
<div class="t" style="left:640.7px;top:233.64px;font-size:12.508px;line-height:1.2;color:#2a2a2a;font-weight:700;transform:scaleX(0.9004);transform-origin:0 0;">Náhradní díly</div>
<div class="t" style="left:726.6px;top:233.64px;font-size:12.508px;line-height:1.2;color:#2a2a2a;font-weight:700;transform:scaleX(0.8301);transform-origin:0 0;">SCADA</div>
<div class="t" style="left:780.7px;top:233.64px;font-size:12.508px;line-height:1.2;color:#2a2a2a;font-weight:700;transform:scaleX(0.9088);transform-origin:0 0;">Notifikace</div>
<div class="t" style="left:852.6px;top:233.64px;font-size:12.508px;line-height:1.2;color:#2a2a2a;font-weight:700;transform:scaleX(0.9132);transform-origin:0 0;">TPM</div>
<div class="t" style="left:895px;top:233.64px;font-size:12.508px;line-height:1.2;color:#2a2a2a;font-weight:700;transform:scaleX(0.8476);transform-origin:0 0;">Lokalizace</div>
<div class="t" style="left:965.7px;top:233.64px;font-size:12.508px;line-height:1.2;color:#2a2a2a;font-weight:700;transform:scaleX(0.8661);transform-origin:0 0;">Sazby</div>
<div class="t" style="left:1011.9px;top:233.64px;font-size:12.508px;line-height:1.2;color:#2a2a2a;font-weight:700;transform:scaleX(0.8763);transform-origin:0 0;">Program údržby</div>
<div class="t" style="left:1106.4px;top:233.64px;font-size:12.508px;line-height:1.2;color:#2a2a2a;font-weight:700;transform:scaleX(0.8779);transform-origin:0 0;">Otevřené údržby</div>
<div class="t" style="left:1207px;top:233.64px;font-size:12.508px;line-height:1.2;color:#2a2a2a;font-weight:700;transform:scaleX(0.8916);transform-origin:0 0;">Historie</div>
<div class="t" style="left:1262.6px;top:233.64px;font-size:12.508px;line-height:1.2;color:#2a2a2a;font-weight:700;transform:scaleX(0.8480);transform-origin:0 0;">Technické údaje</div>
<div class="t" style="left:1361px;top:233.64px;font-size:12.508px;line-height:1.2;color:#2a2a2a;font-weight:700;transform:scaleX(0.9209);transform-origin:0 0;">. . .</div>
<div class="t" style="left:452px;top:275.24px;font-size:15.694px;line-height:1.2;color:#f0f0f0;font-weight:400;transform:scaleX(0.8616);transform-origin:0 0;">Vlastnosti</div>
<div class="a" style="left:452px;top:297px;width:538.8px;height:2px;background:#5f636b;"></div>
<div class="t" style="left:452px;top:315.77px;font-size:11.446px;line-height:1.2;color:#e8e8e8;font-weight:400;transform:scaleX(0.8835);transform-origin:0 0;">Nákladové středisko</div>
<div class="t" style="left:644.2px;top:315.77px;font-size:11.446px;line-height:1.2;color:#eda032;font-weight:400;transform:scaleX(0.8987);transform-origin:0 0;">Org. jednotka pro provádění</div>
<div class="t" style="left:644.2px;top:329.37px;font-size:11.446px;line-height:1.2;color:#eda032;font-weight:400;transform:scaleX(0.8475);transform-origin:0 0;">údržby *</div>
<div class="t" style="left:824px;top:315.77px;font-size:11.446px;line-height:1.2;color:#eda032;font-weight:400;transform:scaleX(0.8475);transform-origin:0 0;">Stav objektu *</div>
<div class="t" style="left:456px;top:339.28px;font-size:12.272px;line-height:1.2;color:#f0f0f0;font-weight:400;transform:scaleX(0.8527);transform-origin:0 0;">N_Středisko_2</div>
<div class="a" style="left:452px;top:356px;width:167px;height:2px;background:#7f8186;"></div>
<svg style="left:583.4px;top:340.0px" width="11" height="11" viewBox="0 0 11 11"><circle cx="5.5" cy="5.5" r="5" fill="#eda032"/><path d="M3.3 3.3 L7.7 7.7 M7.7 3.3 L3.3 7.7" stroke="#30343e" stroke-width="1.1"/></svg>
<svg style="left:606.2px;top:344.0px" width="6" height="3.5" viewBox="0 0 6 3.5"><path d="M0 0 H6 L3 3.5 Z" fill="#eda032"/></svg>
<div class="t" style="left:648.6px;top:352.48px;font-size:12.272px;line-height:1.2;color:#f0f0f0;font-weight:400;transform:scaleX(0.8475);transform-origin:0 0;">Závod 1</div>
<div class="a" style="left:644px;top:368px;width:155px;height:2px;background:#7f8186;"></div>
<svg style="left:763.0px;top:353.2px" width="11" height="11" viewBox="0 0 11 11"><circle cx="5.5" cy="5.5" r="5" fill="#eda032"/><path d="M3.3 3.3 L7.7 7.7 M7.7 3.3 L3.3 7.7" stroke="#30343e" stroke-width="1.1"/></svg>
<svg style="left:786px;top:357.2px" width="6" height="3.5" viewBox="0 0 6 3.5"><path d="M0 0 H6 L3 3.5 Z" fill="#eda032"/></svg>
<div class="t" style="left:828px;top:339.28px;font-size:12.272px;line-height:1.2;color:#f0f0f0;font-weight:400;transform:scaleX(0.9194);transform-origin:0 0;">Prostoj/porucha</div>
<div class="a" style="left:824px;top:356px;width:167px;height:2px;background:#7f8186;"></div>
<svg style="left:955.5px;top:340.0px" width="11" height="11" viewBox="0 0 11 11"><circle cx="5.5" cy="5.5" r="5" fill="#eda032"/><path d="M3.3 3.3 L7.7 7.7 M7.7 3.3 L3.3 7.7" stroke="#30343e" stroke-width="1.1"/></svg>
<svg style="left:978px;top:344.0px" width="6" height="3.5" viewBox="0 0 6 3.5"><path d="M0 0 H6 L3 3.5 Z" fill="#eda032"/></svg>
<div class="t" style="left:452px;top:379.47px;font-size:11.446px;line-height:1.2;color:#e8e8e8;font-weight:400;transform:scaleX(0.8893);transform-origin:0 0;">Odpovídá za objekt údržby</div>
<div class="t" style="left:644px;top:379.47px;font-size:11.446px;line-height:1.2;color:#e8e8e8;font-weight:400;transform:scaleX(0.8475);transform-origin:0 0;">Nadřazený objekt</div>
<div class="t" style="left:824px;top:379.47px;font-size:11.446px;line-height:1.2;color:#eda032;font-weight:400;transform:scaleX(0.8475);transform-origin:0 0;">Režim objektu *</div>
<div class="t" style="left:456px;top:402.98px;font-size:12.272px;line-height:1.2;color:#f0f0f0;font-weight:400;transform:scaleX(0.8861);transform-origin:0 0;">Josef Mistřík</div>
<div class="a" style="left:452px;top:419px;width:167px;height:2px;background:#7f8186;"></div>
<svg style="left:583.5px;top:403.7px" width="11" height="11" viewBox="0 0 11 11"><circle cx="5.5" cy="5.5" r="5" fill="#eda032"/><path d="M3.3 3.3 L7.7 7.7 M7.7 3.3 L3.3 7.7" stroke="#30343e" stroke-width="1.1"/></svg>
<svg style="left:606px;top:407.7px" width="6" height="3.5" viewBox="0 0 6 3.5"><path d="M0 0 H6 L3 3.5 Z" fill="#eda032"/></svg>
<div class="t" style="left:648px;top:402.98px;font-size:12.272px;line-height:1.2;color:#8d8f94;font-weight:400;transform:scaleX(0.8475);transform-origin:0 0;">Výběr...</div>
<div class="a" style="left:644px;top:419px;width:155px;height:2px;background:#7f8186;"></div>
<svg style="left:786px;top:407.7px" width="6" height="3.5" viewBox="0 0 6 3.5"><path d="M0 0 H6 L3 3.5 Z" fill="#eda032"/></svg>
<div class="t" style="left:828px;top:402.98px;font-size:12.272px;line-height:1.2;color:#8d8f94;font-weight:400;transform:scaleX(0.8475);transform-origin:0 0;">Omezený</div>
<div class="a" style="left:824px;top:419px;width:167px;height:2px;background:#6a6d73;"></div>
<svg style="left:978px;top:407.7px" width="6" height="3.5" viewBox="0 0 6 3.5"><path d="M0 0 H6 L3 3.5 Z" fill="#8a6a3a"/></svg>
<div class="t" style="left:452px;top:430.07px;font-size:11.446px;line-height:1.2;color:#e8e8e8;font-weight:400;transform:scaleX(0.8475);transform-origin:0 0;">Popis objektu</div>
<div class="t" style="left:456px;top:453.48px;font-size:12.272px;line-height:1.2;color:#f0f0f0;font-weight:400;transform:scaleX(0.8946);transform-origin:0 0;">Soustružnický automat</div>
<div class="a" style="left:452px;top:490px;width:347px;height:2px;background:#7f8186;"></div>
<div class="t" style="left:1033.3px;top:275.44px;font-size:15.694px;line-height:1.2;color:#f0f0f0;font-weight:400;transform:scaleX(0.8475);transform-origin:0 0;">Akce</div>
<div class="a" style="left:1033px;top:297px;width:350px;height:2px;background:#5f636b;"></div>
<div class="t" style="left:1033px;top:315.77px;font-size:11.446px;line-height:1.2;color:#e8e8e8;font-weight:400;transform:scaleX(0.8475);transform-origin:0 0;">Aktivní?</div>
<div class="a" style="left:1033px;top:335.5px;width:13.5px;height:13.5px;border:1.5px solid #8e9095;background:#30343e"></div>
<svg style="left:1033px;top:335.5px" width="13.5" height="13.5" viewBox="0 0 14 14"><path d="M3.2 7.5 L6 10.3 L11 3.8" fill="none" stroke="#eda032" stroke-width="1.6"/></svg>
<div class="t" style="left:1033px;top:358.77px;font-size:11.446px;line-height:1.2;color:#e8e8e8;font-weight:400;transform:scaleX(0.8731);transform-origin:0 0;">Nabízen k jednorázové údržbě?</div>
<div class="t" style="left:1221px;top:358.77px;font-size:11.446px;line-height:1.2;color:#e8e8e8;font-weight:400;transform:scaleX(0.8798);transform-origin:0 0;">Provádí prediktivní údržbu?</div>
<div class="a" style="left:1033px;top:379.3px;width:13.5px;height:13.5px;border:1.5px solid #8e9095;background:#30343e"></div>
<svg style="left:1033px;top:379.3px" width="13.5" height="13.5" viewBox="0 0 14 14"><path d="M3.2 7.5 L6 10.3 L11 3.8" fill="none" stroke="#eda032" stroke-width="1.6"/></svg>
<div class="a" style="left:1221px;top:379.3px;width:13.5px;height:13.5px;border:1.5px solid #8e9095;background:#30343e"></div>
<svg style="left:1221px;top:379.3px" width="13.5" height="13.5" viewBox="0 0 14 14"><path d="M3.2 7.5 L6 10.3 L11 3.8" fill="none" stroke="#eda032" stroke-width="1.6"/></svg>
<div class="t" style="left:1033px;top:402.07px;font-size:11.446px;line-height:1.2;color:#e8e8e8;font-weight:400;transform:scaleX(0.8475);transform-origin:0 0;">MTTR/MTBF?</div>
<div class="t" style="left:1221px;top:402.07px;font-size:11.446px;line-height:1.2;color:#e8e8e8;font-weight:400;transform:scaleX(0.8475);transform-origin:0 0;">Outsourcing?</div>
<div class="a" style="left:1033px;top:423.2px;width:13.5px;height:13.5px;border:1.5px solid #8e9095;background:#30343e"></div>
<div class="a" style="left:1221px;top:423.2px;width:13.5px;height:13.5px;border:1.5px solid #8e9095;background:#30343e"></div>
<div class="t" style="left:1033px;top:445.87px;font-size:11.446px;line-height:1.2;color:#e8e8e8;font-weight:400;transform:scaleX(0.8475);transform-origin:0 0;">Přebírá režim?</div>
<div class="t" style="left:1221px;top:445.87px;font-size:11.446px;line-height:1.2;color:#e8e8e8;font-weight:400;transform:scaleX(0.8600);transform-origin:0 0;">Vyžaduje schvalování údržby?</div>
<div class="a" style="left:1033px;top:467.2px;width:13.5px;height:13.5px;border:1.5px solid #8e9095;background:#30343e"></div>
<svg style="left:1033px;top:467.2px" width="13.5" height="13.5" viewBox="0 0 14 14"><path d="M3.2 7.5 L6 10.3 L11 3.8" fill="none" stroke="#eda032" stroke-width="1.6"/></svg>
<div class="a" style="left:1221px;top:467px;width:30px;height:15px;border:1.5px solid #8e9095;background:#3a3d46"></div>
<div class="a" style="left:1222.5px;top:468.5px;width:11.5px;height:12px;background:#d17f1a;"></div>
<div class="t" style="left:1236px;top:471.23px;font-size:6.490px;line-height:1.2;color:#c8c8c8;font-weight:700;transform:scaleX(0.8475);transform-origin:0 0;">VYP</div>
<svg style="left:200px;top:240px" width="200" height="165" viewBox="200 240 200 165">
<defs>
<linearGradient id="tray" x1="0" y1="0" x2="0" y2="1"><stop offset="0" stop-color="#7c7c7c"/><stop offset="0.45" stop-color="#adadad"/><stop offset="1" stop-color="#c9c9c9"/></linearGradient>
<linearGradient id="bed" x1="0" y1="0" x2="0" y2="1"><stop offset="0" stop-color="#d0d0d0"/><stop offset="0.25" stop-color="#6a6a6a"/><stop offset="0.45" stop-color="#c8c8c8"/><stop offset="0.7" stop-color="#8a8a8a"/><stop offset="1" stop-color="#bdbdbd"/></linearGradient>
</defs>
<!-- red back splash -->
<path d="M257 258 L351 255 L390 253 L388 312 L257 312 Z" fill="#e5392a"/>
<path d="M352 270 L389 270 L389 274 L352 274 Z" fill="#c92a1e"/>
<!-- chuck guard -->
<path d="M243 250 L262 247 L273 258 L273 272 L262 272 L258 258 L243 259 Z" fill="#e23a2b"/>
<rect x="245" y="250" width="12" height="5" fill="#f0f0f0"/>
<!-- headstock / gearbox -->
<path d="M209.5 254 L244 252 L244 310 L210.5 310 Z" fill="#e2e2e2"/>
<path d="M219 254 L244 252 L244 310 L219 310 Z" fill="#d9d9d9"/>
<rect x="218" y="283" width="1" height="26" fill="#bbb"/>
<circle cx="228" cy="264" r="3" fill="#8aa"/><path d="M223 264 A5 5 0 0 0 233 264" stroke="#3a6ac8" stroke-width="1.6" fill="none"/>
<rect x="224" y="275" width="11" height="2" fill="#4a7ad0"/>
<circle cx="230" cy="281" r="1.8" fill="#e33"/><circle cx="234" cy="281" r="1.8" fill="#ea3"/><circle cx="226" cy="281" r="1.6" fill="#3a6"/>
<g fill="#555"><circle cx="222" cy="292" r="1.6"/><circle cx="228" cy="292" r="1.6"/><circle cx="222" cy="299" r="1.6"/><circle cx="228" cy="299" r="1.6"/><rect x="216" y="267" width="4" height="2"/></g>
<rect x="225" y="246" width="2" height="10" fill="#777"/>
<!-- chuck -->
<path d="M244 258 L262 256 L265 262 L265 275 L246 276 Z" fill="#8c8c8c"/>
<ellipse cx="255" cy="266" rx="7" ry="8" fill="#9e9e9e"/>
<!-- bed / ways -->
<path d="M241 280 L381 280 L381 309 L241 309 Z" fill="url(#bed)"/>
<path d="M241 281 L381 281 L381 284 L241 284 Z" fill="#e0e0e0"/>
<rect x="370" y="283" width="11" height="26" fill="#cfcfcf"/>
<rect x="374" y="303" width="8" height="8" fill="#444"/>
<!-- carriage -->
<path d="M278 249 L286 248 L288 262 L292 264 L292 276 L280 276 L280 262 Z" fill="#c4c4c4"/>
<rect x="281" y="262" width="8" height="3" fill="#555"/>
<path d="M296 251 L304 249 L306 257 L320 253 L322 256 L306 262 L298 262 Z" fill="#b8b8b8"/>
<path d="M284 272 L320 270 L322 280 L316 300 L298 302 L290 296 L282 290 Z" fill="#cdcdcd"/>
<rect x="304" y="252" width="2.5" height="14" fill="#777"/>
<ellipse cx="290" cy="287" rx="6" ry="6" fill="#e6e6e6"/><ellipse cx="290" cy="287" rx="3.5" ry="3.5" fill="#2a2a2a"/>
<path d="M302 288 L306 300 L310 312 L306 312 L300 300 Z" fill="#9a9a9a"/>
<circle cx="328" cy="296" r="2.5" fill="#e64a2a"/>
<!-- tailstock -->
<path d="M318 258 L352 256 L352 280 L320 280 Z" fill="#dcdcdc"/>
<path d="M318 268 L352 267 L352 280 L320 280 Z" fill="#c9c9c9"/>
<ellipse cx="358" cy="259" rx="4" ry="8" fill="none" stroke="#bbb" stroke-width="2.5"/>
<!-- red table top -->
<path d="M209 309 L390 311 L389 318 L210 315 Z" fill="#e3392a"/>
<path d="M276 302 L318 301 L330 311 L272 311 Z" fill="#e23a2b"/>
<path d="M280 307 L340 308 L338 312 L280 311 Z" fill="#333"/>
<!-- left pedestal -->
<path d="M211.5 315 L244.5 316 L244.5 377 L212 372 Z" fill="#d8d8d8"/>
<path d="M217 323 L237 324 L238 366 L218 364 Z" fill="#e9e9e9"/>
<rect x="237" y="324" width="1.4" height="42" fill="#333"/>
<rect x="217" y="367" width="4" height="4" fill="#555"/><rect x="235" y="370" width="4" height="4" fill="#555"/>
<!-- middle tray -->
<path d="M244.5 316 L339 318 L339 365 L267 358 L244.5 368 Z" fill="url(#tray)"/>
<path d="M244.5 316 L339 318 L339 330 L244.5 325 Z" fill="#d8d8d8"/>
<path d="M244.5 325 L339 330 L339 332 L244.5 327 Z" fill="#9a9a9a"/>
<path d="M245 365 L339 375 L339 381 L245 370 Z" fill="#4a4a4a"/>
<!-- right pedestal -->
<path d="M338.5 318 L373 319 L373 399 L338.5 395 Z" fill="#d8d8d8"/>
<path d="M373 319 L386.5 318 L386.5 394 L373 399 Z" fill="#cfcfcf"/>
<circle cx="345" cy="326" r="2.5" fill="none" stroke="#bbb" stroke-width="0.8"/>
<rect x="350" y="388" width="8" height="6" fill="#444"/>
</svg>
<div class="a" style="left:207.8px;top:463.2px;width:106.80000000000001px;height:24.400000000000034px;background:#eda032;"></div>
<div class="t" style="left:218.1px;top:468.98px;font-size:12.272px;line-height:1.2;color:#2a2a2a;font-weight:700;transform:scaleX(0.8988);transform-origin:0 0;">Odebrat obrázek</div>
<div class="a" style="left:435.7px;top:509px;width:85.80000000000001px;height:24.299999999999955px;background:#eda032;"></div>
<div class="t" style="left:446.4px;top:514.73px;font-size:12.272px;line-height:1.2;color:#2a2a2a;font-weight:700;transform:scaleX(0.8966);transform-origin:0 0;">Nová údržba</div>
<div class="a" style="left:638.6px;top:509px;width:110.0px;height:23.5px;background:#eda032;"></div>
<div class="t" style="left:649.1px;top:514.33px;font-size:12.272px;line-height:1.2;color:#2a2a2a;font-weight:700;transform:scaleX(0.8648);transform-origin:0 0;">Pozice na layoutu</div>
<div class="a" style="left:827.6px;top:509px;width:91.5px;height:23.5px;background:#eda032;"></div>
<div class="t" style="left:838.8px;top:514.33px;font-size:12.272px;line-height:1.2;color:#2a2a2a;font-weight:700;transform:scaleX(0.8876);transform-origin:0 0;">Dokumentace</div>
<div class="a" style="left:1016.7px;top:509px;width:116.29999999999995px;height:23.5px;background:#eda032;"></div>
<div class="t" style="left:1027.8px;top:514.33px;font-size:12.272px;line-height:1.2;color:#2a2a2a;font-weight:700;transform:scaleX(0.8941);transform-origin:0 0;">Hierarchie objektů</div>
<div class="t" style="left:224px;top:672.28px;font-size:12.272px;line-height:1.2;color:#9a9ca0;font-weight:400;transform:scaleX(0.8475);transform-origin:0 0;">Výběr...</div>
<div class="a" style="left:219.5px;top:689px;width:252.5px;height:2px;background:#77797e;"></div>
<div class="a" style="left:996.2px;top:667.2px;width:95.5px;height:23.59999999999991px;background:#eda032;"></div>
<div class="t" style="left:1006.7px;top:672.58px;font-size:12.272px;line-height:1.2;color:#2a2a2a;font-weight:700;transform:scaleX(0.8709);transform-origin:0 0;">Resetovat data</div>
<div class="a" style="left:1102px;top:667.2px;width:122.79999999999995px;height:23.59999999999991px;background:#eda032;"></div>
<div class="t" style="left:1113px;top:672.58px;font-size:12.272px;line-height:1.2;color:#2a2a2a;font-weight:700;transform:scaleX(0.8896);transform-origin:0 0;">DevModeSaveItems</div>
<div class="a" style="left:1235px;top:667.2px;width:50.200000000000045px;height:23.59999999999991px;background:#eda032;"></div>
<div class="t" style="left:1245px;top:672.58px;font-size:12.272px;line-height:1.2;color:#2a2a2a;font-weight:700;transform:scaleX(0.9284);transform-origin:0 0;">Uložit</div>
<div class="a" style="left:1295.5px;top:667.2px;width:90.70000000000005px;height:23.59999999999991px;background:#eda032;"></div>
<div class="t" style="left:1305.2px;top:672.58px;font-size:12.272px;line-height:1.2;color:#2a2a2a;font-weight:700;transform:scaleX(0.9107);transform-origin:0 0;">Uložit a zavřít</div>
</div></div></body></html>
